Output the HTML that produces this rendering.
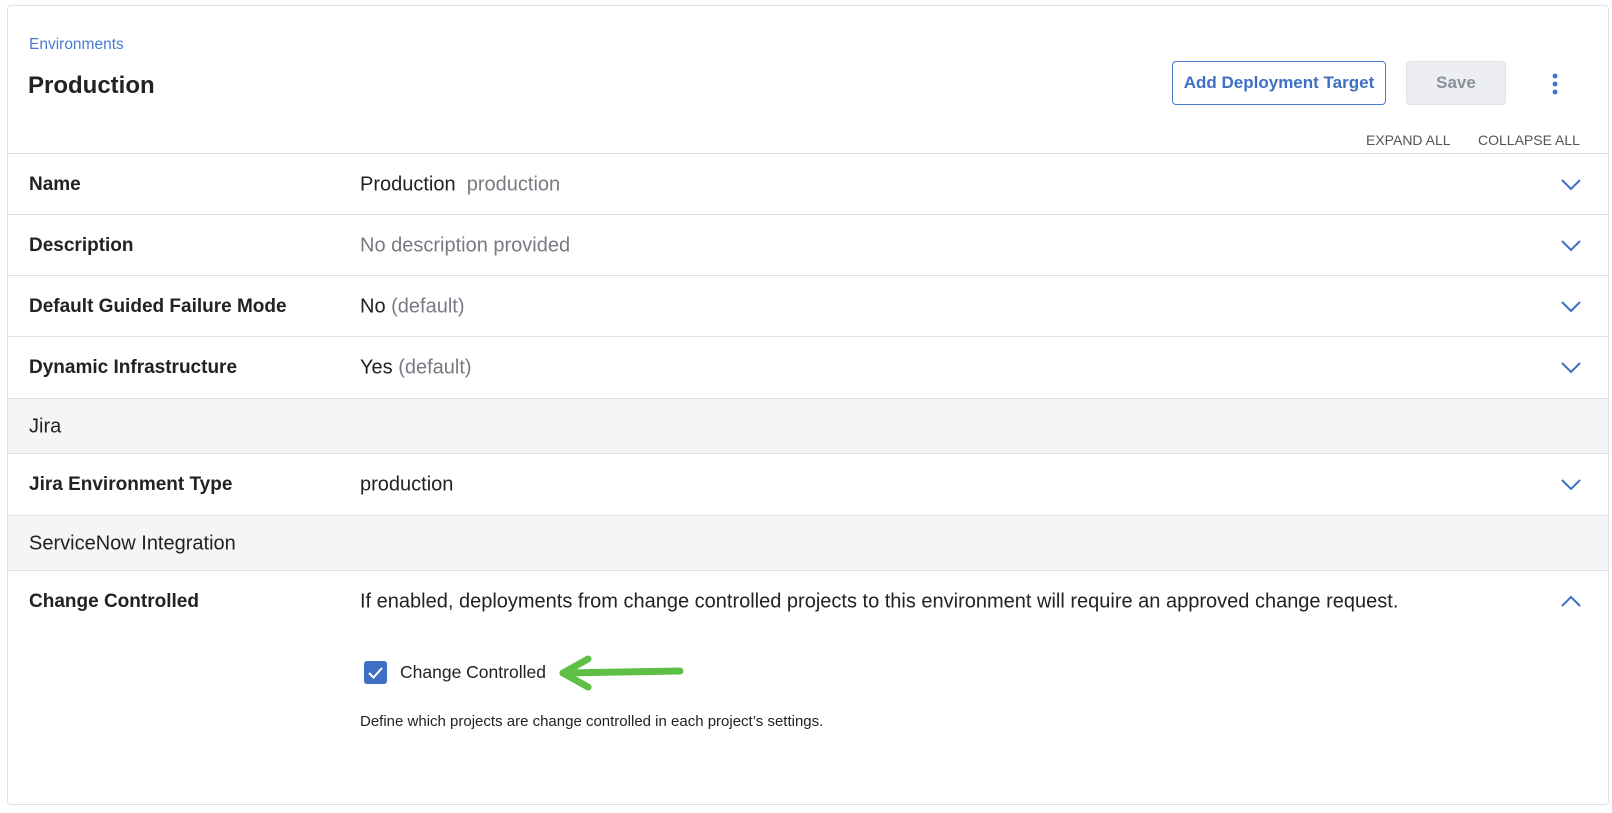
<!DOCTYPE html>
<html><head><meta charset="utf-8"><style>
*{box-sizing:border-box;margin:0;padding:0}
body{width:1612px;height:813px;background:#fff;font-family:"Liberation Sans",sans-serif;color:#1f2328;position:relative;overflow:hidden}
.card{position:absolute;left:7px;top:5px;width:1602px;height:800px;border:1px solid #dcdfe3;border-radius:4px}
.abs{position:absolute;white-space:nowrap}
.line{position:absolute;left:8px;width:1600px;height:1px;background:#dcdfe3}
.gray{position:absolute;left:8px;width:1600px;background:#f4f5f7}
.lbl{position:absolute;left:29px;font-weight:bold;font-size:19px;transform:translateY(-50%);color:#222}
.val{position:absolute;left:360px;font-size:20px;transform:translateY(-50%);color:#222}
.muted{color:#767b82}
.chev{position:absolute;left:1561px;width:20px;height:12px}
</style></head><body>
<div class="card"></div>
<div class="abs" style="left:29px;top:36px;font-size:15.5px;color:#4a7bd0">Environments</div>
<div class="abs" style="left:28px;top:72px;font-size:24px;font-weight:bold;color:#222">Production</div>
<div class="abs" style="left:1172px;top:61px;width:214px;height:44px;border:1px solid #4a7bd0;border-radius:4px;color:#3f6fc4;font-weight:bold;font-size:17px;display:flex;align-items:center;justify-content:center">Add Deployment Target</div>
<div class="abs" style="left:1406px;top:61px;width:100px;height:44px;border:1px solid #dfe1e5;background:#eceef1;border-radius:4px;color:#8a919b;font-weight:bold;font-size:17px;display:flex;align-items:center;justify-content:center">Save</div>
<svg class="abs" style="left:1550px;top:73px" width="10" height="22"><circle cx="5" cy="3" r="2.4" fill="#3f6fc4"/><circle cx="5" cy="11" r="2.4" fill="#3f6fc4"/><circle cx="5" cy="19" r="2.4" fill="#3f6fc4"/></svg>
<div class="abs" style="left:1366px;top:132px;font-size:14px;color:#555">EXPAND ALL</div>
<div class="abs" style="left:1478px;top:132px;font-size:14px;color:#555">COLLAPSE ALL</div>

<div class="gray" style="top:398px;height:55px"></div>
<div class="gray" style="top:515px;height:55px"></div>
<div class="line" style="top:153px"></div>
<div class="line" style="top:214px"></div>
<div class="line" style="top:275px"></div>
<div class="line" style="top:336px"></div>
<div class="line" style="top:398px"></div>
<div class="line" style="top:453px"></div>
<div class="line" style="top:515px"></div>
<div class="line" style="top:570px"></div>

<div class="lbl" style="top:185px">Name</div>
<div class="val" style="top:185px">Production&nbsp; <span class="muted">production</span></div>
<div class="lbl" style="top:246px">Description</div>
<div class="val muted" style="top:246px">No description provided</div>
<div class="lbl" style="top:307px">Default Guided Failure Mode</div>
<div class="val" style="top:307px">No <span class="muted">(default)</span></div>
<div class="lbl" style="top:368px">Dynamic Infrastructure</div>
<div class="val" style="top:368px">Yes <span class="muted">(default)</span></div>
<div class="lbl" style="top:427px;font-weight:normal;font-size:20px">Jira</div>
<div class="lbl" style="top:485px">Jira Environment Type</div>
<div class="val" style="top:485px">production</div>
<div class="lbl" style="top:544px;font-weight:normal;font-size:20px">ServiceNow Integration</div>
<div class="lbl" style="top:602px">Change Controlled</div>
<div class="val" style="top:602px">If enabled, deployments from change controlled projects to this environment will require an approved change request.</div>

<svg class="chev" style="top:179px" viewBox="0 0 20 12"><path d="M1 1 L10 10 L19 1" fill="none" stroke="#3f6fc4" stroke-width="2"/></svg>
<svg class="chev" style="top:240px" viewBox="0 0 20 12"><path d="M1 1 L10 10 L19 1" fill="none" stroke="#3f6fc4" stroke-width="2"/></svg>
<svg class="chev" style="top:301px" viewBox="0 0 20 12"><path d="M1 1 L10 10 L19 1" fill="none" stroke="#3f6fc4" stroke-width="2"/></svg>
<svg class="chev" style="top:362px" viewBox="0 0 20 12"><path d="M1 1 L10 10 L19 1" fill="none" stroke="#3f6fc4" stroke-width="2"/></svg>
<svg class="chev" style="top:479px" viewBox="0 0 20 12"><path d="M1 1 L10 10 L19 1" fill="none" stroke="#3f6fc4" stroke-width="2"/></svg>
<svg class="chev" style="top:595px" viewBox="0 0 20 12"><path d="M1 11 L10 2 L19 11" fill="none" stroke="#3f6fc4" stroke-width="2"/></svg>

<div class="abs" style="left:364px;top:661px;width:23px;height:23px;background:#3f6fc4;border-radius:3px"></div>
<svg class="abs" style="left:364px;top:661px" width="23" height="23"><path d="M5 12 L9.5 16.5 L18 7" fill="none" stroke="#fff" stroke-width="2"/></svg>
<div class="abs" style="left:400px;top:662px;font-size:17.5px;color:#222">Change Controlled</div>
<svg class="abs" style="left:555px;top:652px" width="135" height="40"><path d="M125 19 L8 21" stroke="#5fbf45" stroke-width="7" stroke-linecap="round" fill="none"/><path d="M33 7 L8 21 L33 35" stroke="#5fbf45" stroke-width="7" stroke-linecap="round" stroke-linejoin="round" fill="none"/></svg>
<div class="abs" style="left:360px;top:713px;font-size:15px;color:#222">Define which projects are change controlled in each project’s settings.</div>
</body></html>
